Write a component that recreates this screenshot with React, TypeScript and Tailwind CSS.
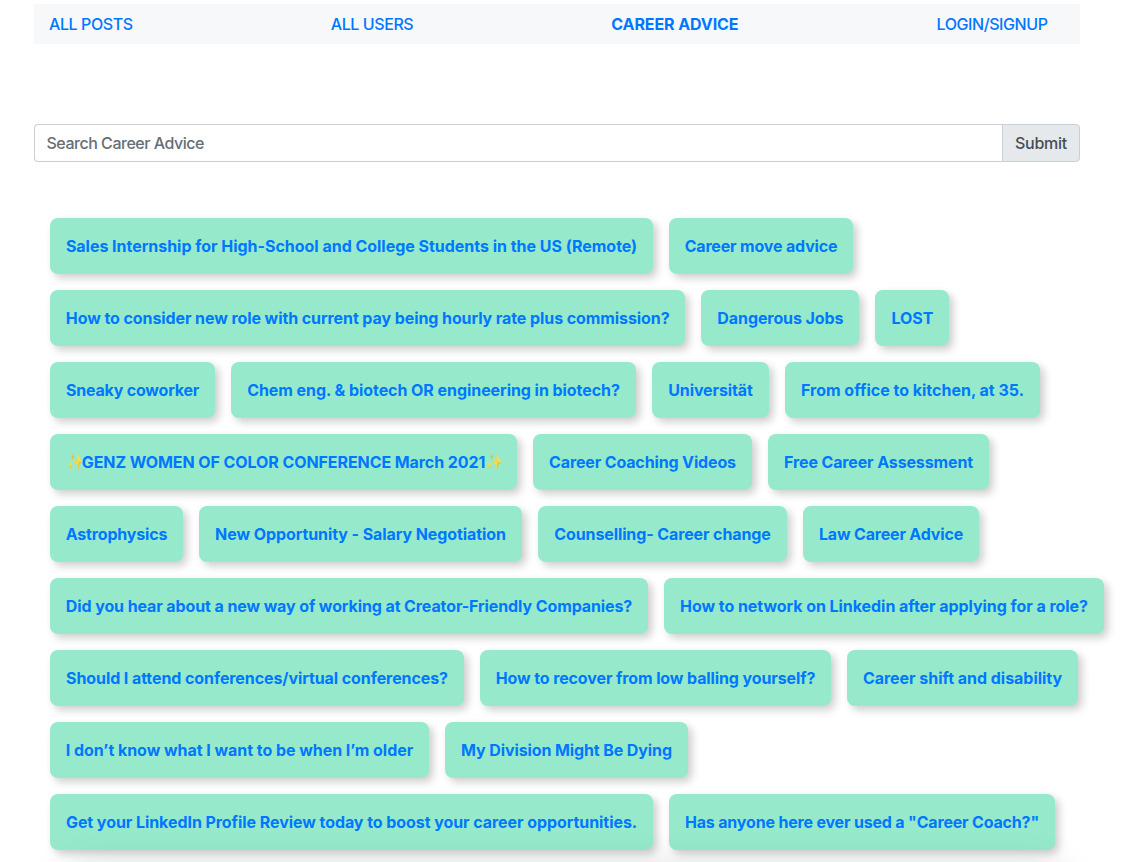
import { useState } from 'react';

type Post = { title: string; box: string; sparkles?: boolean };

const rows: Post[][] = [
  [
    { title: 'Sales Internship for High-School and College Students in the US (Remote)', box: 'w-[603px] tracking-[-0.025px]' },
    { title: 'Career move advice', box: 'w-[184px] tracking-[-0.17px]' },
  ],
  [
    { title: 'How to consider new role with current pay being hourly rate plus commission?', box: 'w-[635.4px] tracking-[-0.085px]' },
    { title: 'Dangerous Jobs', box: 'w-[158px] tracking-[-0.09px]' },
    { title: 'LOST', box: 'w-[74px] tracking-[-0.03px]' },
  ],
  [
    { title: 'Sneaky coworker', box: 'w-[165px] tracking-[-0.2px]' },
    { title: 'Chem eng. & biotech OR engineering in biotech?', box: 'w-[405px] tracking-[-0.06px]' },
    { title: 'Universität', box: 'w-[117px] tracking-[-0.1px]' },
    { title: 'From office to kitchen, at 35.', box: 'w-[255px] tracking-[0px]' },
  ],
  [
    { title: 'GENZ WOMEN OF COLOR CONFERENCE March 2021', box: 'w-[467px] tracking-[-0.085px]', sparkles: true },
    { title: 'Career Coaching Videos', box: 'w-[219px] tracking-[-0.14px]' },
    { title: 'Free Career Assessment', box: 'w-[221px] tracking-[-0.13px]' },
  ],
  [
    { title: 'Astrophysics', box: 'w-[133px] tracking-[-0.17px]' },
    { title: 'New Opportunity - Salary Negotiation', box: 'w-[323px] tracking-[-0.08px]' },
    { title: 'Counselling- Career change', box: 'w-[249px] tracking-[-0.11px]' },
    { title: 'Law Career Advice', box: 'w-[176px] tracking-[-0.18px]' },
  ],
  [
    { title: 'Did you hear about a new way of working at Creator-Friendly Companies?', box: 'w-[598px] tracking-[-0.105px]' },
    { title: 'How to network on Linkedin after applying for a role?', box: 'w-[440px] tracking-[-0.055px]' },
  ],
  [
    { title: 'Should I attend conferences/virtual conferences?', box: 'w-[414px] tracking-[-0.085px]' },
    { title: 'How to recover from low balling yourself?', box: 'w-[351px] tracking-[-0.11px]' },
    { title: 'Career shift and disability', box: 'w-[231px] tracking-[-0.03px]' },
  ],
  [
    { title: 'I don’t know what I want to be when I’m older', box: 'w-[379px] tracking-[-0.04px]' },
    { title: 'My Division Might Be Dying', box: 'w-[243px] tracking-[-0.11px]' },
  ],
  [
    { title: 'Get your LinkedIn Profile Review today to boost your career opportunities.', box: 'w-[603px] tracking-[-0.065px]' },
    { title: 'Has anyone here ever used a "Career Coach?"', box: 'w-[386px] tracking-[-0.18px]' },
  ],
];

function Sparkles() {
  return <span className="inline-block w-[15.7px] text-[15px] tracking-normal opacity-80">✨</span>;
}

function Chip({ post }: { post: Post }) {
  return (
    <a
      href="#"
      className={`flex h-14 shrink-0 items-center justify-center whitespace-nowrap rounded-lg bg-[#96eacb] font-bold text-[#0077ff] shadow-[4px_4px_8px_rgba(0,0,0,0.2)] ${post.box}`}
    >
      {post.sparkles && <Sparkles />}
      <span className="relative">{post.title}</span>
      {post.sparkles && <Sparkles />}
    </a>
  );
}

export default function App() {
  const [query, setQuery] = useState('');
  return (
    <div className="relative h-[862px] w-full overflow-hidden bg-white pl-[34px] pt-1 font-['Inter','Liberation_Sans',sans-serif] text-base">
      <nav className="flex h-10 w-[1046px] items-center justify-between bg-[#f7f8fa] pl-[15px] pr-[32.5px] font-[450] text-[#0077ff]">
        <a href="#" className="tracking-[-0.4px]">ALL POSTS</a>
        <a href="#" className="tracking-[-0.42px]">ALL USERS</a>
        <a href="#" className="font-bold tracking-[-0.1px]">CAREER ADVICE</a>
        <a href="#" className="tracking-[-0.42px]">LOGIN/SIGNUP</a>
      </nav>
      <form className="mt-20 flex h-[38px] w-[1046px] font-[450]" onSubmit={(e) => e.preventDefault()}>
        <input
          value={query}
          onChange={(e) => setQuery(e.target.value)}
          placeholder="Search Career Advice"
          className="min-w-0 flex-1 rounded-l border border-r-0 border-[#c8cfd6] px-[11.5px] tracking-[-0.48px] placeholder:text-[#656e77]"
        />
        <button className="w-[78px] rounded-r border border-[#c8cfd6] bg-[#e5e9ec] tracking-[-0.25px] text-[#464d54]">
          Submit
        </button>
      </form>
      <div className="mt-14 flex flex-col gap-4 pl-4">
        {rows.map((row, i) => (
          <div key={i} className="flex gap-4">
            {row.map((post) => (
              <Chip key={post.title} post={post} />
            ))}
          </div>
        ))}
      </div>
      <div className="pointer-events-none absolute left-[70px] top-[870px] h-10 w-[990px] shadow-[0_0_40px_rgba(0,0,0,0.16)]" />
    </div>
  );
}
